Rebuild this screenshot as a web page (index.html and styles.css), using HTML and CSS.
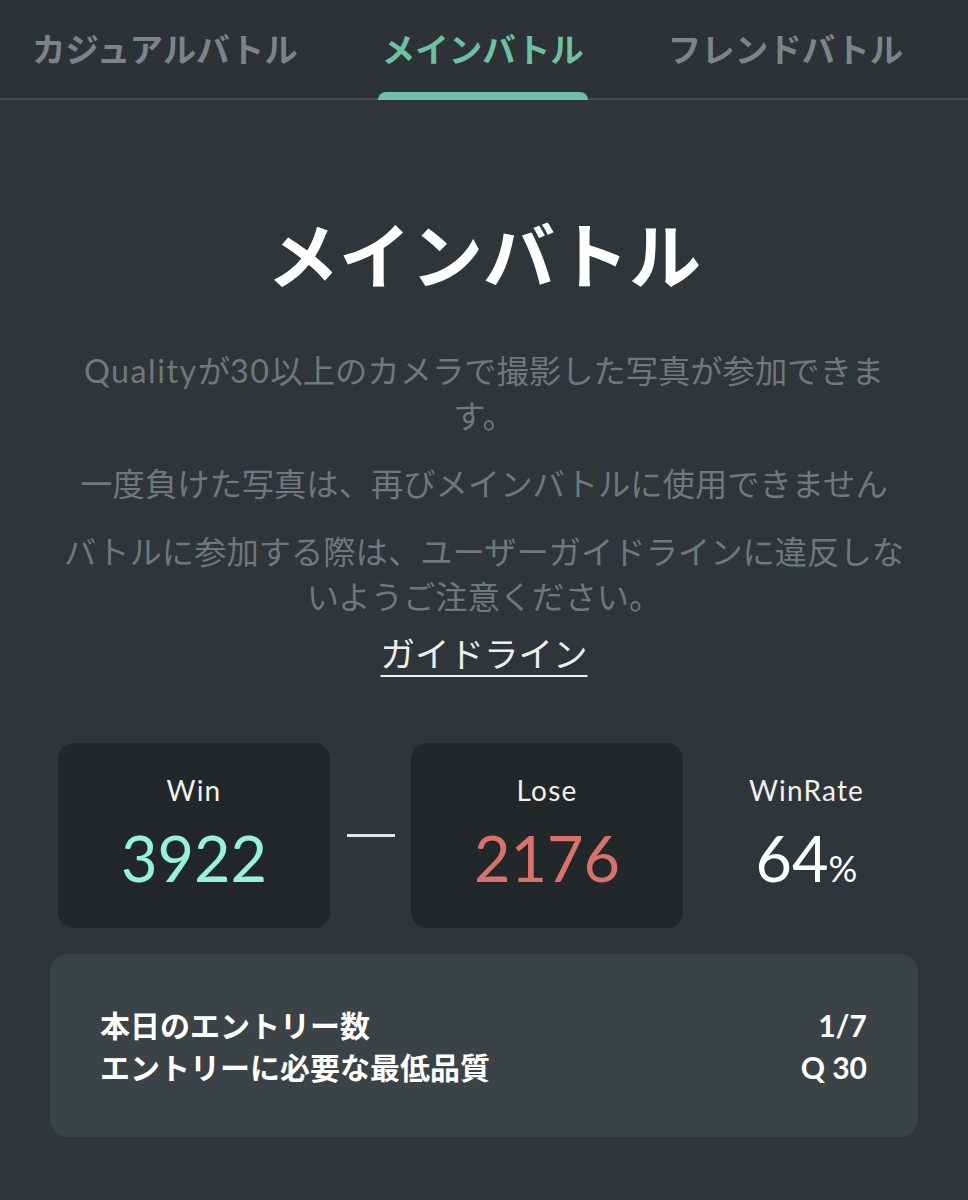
FILE: index.html
```html
<!DOCTYPE html>
<html lang="ja">
<head>
<meta charset="utf-8">
<title>メインバトル</title>
<link rel="stylesheet" href="styles.css">
</head>
<body>
<nav class="tabs">
  <div class="tab">カジュアルバトル</div>
  <div class="tab active">メインバトル</div>
  <div class="tab">フレンドバトル</div>
</nav>
<main class="content">
  <h1 class="title">メインバトル</h1>
  <div class="desc">
    <p><span class="latin">Quality</span>が<span class="latin">30</span>以上のカメラで撮影した写真が参加できます。</p>
    <p>一度負けた写真は、再びメインバトルに使用できません</p>
    <p>バトルに参加する際は、ユーザーガイドラインに違反しないようご注意ください。</p>
  </div>
  <a class="guide" href="#">ガイドライン</a>

  <section class="stats">
    <div class="card">
      <div class="label">Win</div>
      <div class="num win">3922</div>
    </div>
    <div class="dash"></div>
    <div class="card">
      <div class="label">Lose</div>
      <div class="num lose">2176</div>
    </div>
    <div class="rate">
      <div class="label">WinRate</div>
      <div class="num">64<span class="pct">%</span></div>
    </div>
  </section>

  <section class="info">
    <div class="row"><span>本日のエントリー数</span><span>1/7</span></div>
    <div class="row"><span>エントリーに必要な最低品質</span><span>Q 30</span></div>
  </section>
</main>
</body>
</html>
```

FILE: styles.css
```css
* { box-sizing: border-box; }
html, body {
  margin: 0;
  padding: 0;
  background: #2f3538;
}
body {
  font-family: "Lato", "Noto Sans CJK JP", sans-serif;
  color: #ffffff;
  width: 968px;
  min-height: 1200px;
  overflow: hidden;
}

.tabs {
  display: flex;
  gap: 84px;
  padding-left: 32px;
  height: 100px;
  border-bottom: 2px solid #464e51;
  background: #2c3235;
  white-space: nowrap;
}
.tab {
  position: relative;
  display: flex;
  align-items: center;
  padding-bottom: 4px;
  font-family: "Noto Sans CJK JP", sans-serif;
  font-size: 33.5px;
  font-weight: 700;
  color: #7b8588;
}
.tab.active { color: #6fc0a2; }
.tab.active::after {
  content: "";
  position: absolute;
  left: -4px;
  right: -4px;
  bottom: -2px;
  height: 8px;
  background: #6fc0a2;
  border-radius: 8px 8px 0 0;
}

.content {
  padding: 0 50px;
  text-align: center;
}
.title {
  margin: 109px 0 0;
  font-family: "Noto Sans CJK JP", sans-serif;
  font-size: 72px;
  line-height: 86px;
  font-weight: 700;
}
.desc {
  width: 850px;
  margin: 53px auto 0;
  color: #70787b;
  font-size: 32.3px;
  line-height: 45px;
}
.desc .latin { letter-spacing: 1.5px; }
.desc p { margin: 0 0 23px; }
.desc p:last-child { margin-bottom: 0; }
.guide {
  display: inline-block;
  margin-top: 11px;
  font-family: "Noto Sans CJK JP", sans-serif;
  font-size: 34.5px;
  line-height: 45px;
  color: #eeeeee;
  text-decoration: underline;
  text-underline-offset: 8px;
  text-decoration-thickness: 2px;
}

.stats {
  display: grid;
  grid-template-columns: 272px 81px 272px 1fr;
  align-items: center;
  margin: 68px 0 0 8px;
}
.card {
  height: 185px;
  background: #222729;
  border-radius: 16px;
  padding-top: 29px;
}
.label {
  font-size: 28px;
  line-height: 36px;
  letter-spacing: 1.2px;
  color: #f0f0f0;
}
.num {
  margin-top: 15px;
  font-size: 63px;
  line-height: 70px;
  color: #ffffff;
}
.num.win { color: #98f2d6; }
.num.lose { color: #d9716d; }
.pct { font-size: 36px; }
.dash {
  height: 3px;
  margin: 0 16px 0 17px;
  background: #e6e6e6;
}
.rate {
  height: 185px;
  padding-top: 29px;
  padding-left: 12px;
}

.info {
  margin-top: 26px;
  background: #3c4346;
  border-radius: 18px;
  padding: 50px 51px 49px 50px;
  font-family: "Lato", "Noto Sans CJK JP", sans-serif;
  font-weight: 700;
  font-size: 30px;
  line-height: 42px;
  text-align: left;
}
.row {
  display: flex;
  justify-content: space-between;
}
```
